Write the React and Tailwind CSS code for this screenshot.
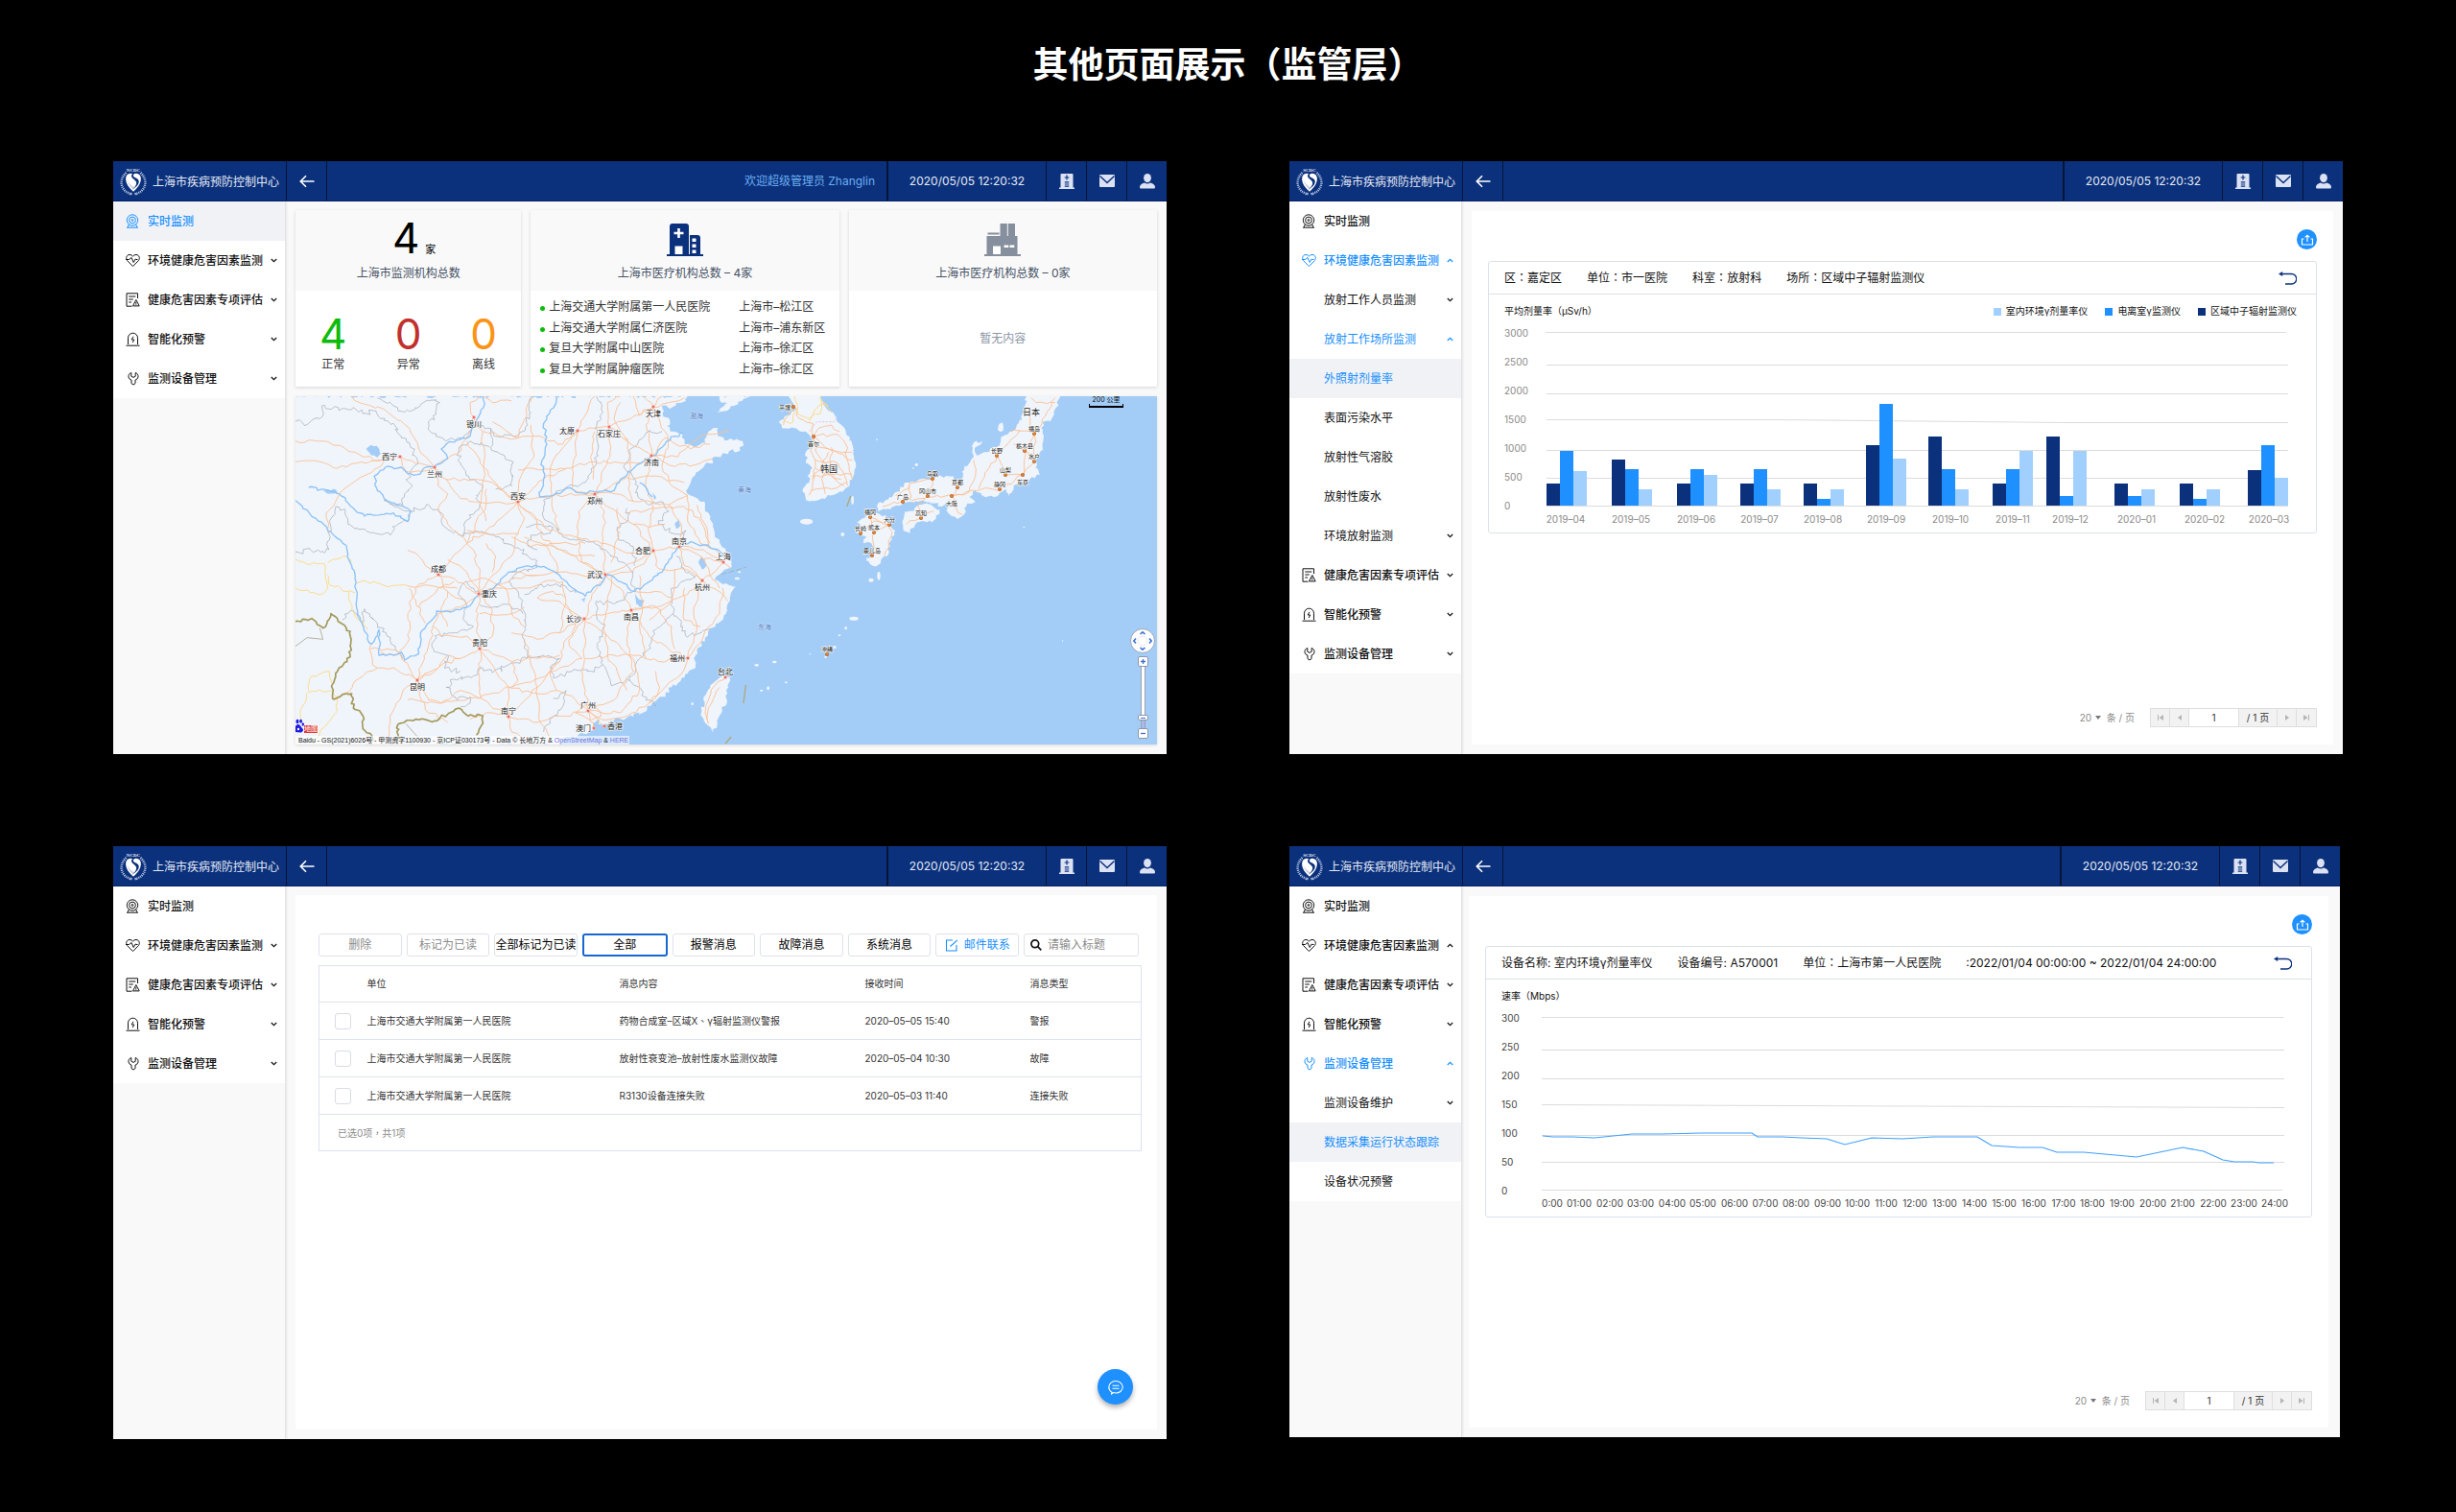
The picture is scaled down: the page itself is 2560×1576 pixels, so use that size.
import React from "react";

const FONT = "font-['Inter','Noto_Sans_CJK_SC',sans-serif]";

/* ---------- icons ---------- */

function Emblem({ label }) {
  return (
    <svg viewBox="0 0 28 30" className="h-[30px] w-7 shrink-0" aria-hidden="true">
      <text x="14" y="5" textAnchor="middle" fontSize="5" fontWeight="700" fill="#e8eefb" fontFamily="Liberation Serif">{label}</text>
      <path d="M6.500 6.200C.8 11-.2 19 5 24.500c2 2 4.800 3.300 7.800 3.700" fill="none" stroke="#c9d5ee" strokeWidth="2.400" strokeDasharray="1 1" />
      <path d="M21.500 6.200c5.700 4.800 6.700 12.800 1.500 18.300-2 2-4.800 3.300-7.800 3.700" fill="none" stroke="#c9d5ee" strokeWidth="2.400" strokeDasharray="1 1" />
      <path d="M10 29l2-1.600M18 29l-2-1.600" stroke="#c9d5ee" strokeWidth=".9" />
      <path d="M14 7.500c-2.500-1.600-6-.8-7.300 2C5 13.500 7 20 14 25.800 21 20 23 13.500 21.300 9.500c-1.300-2.800-4.800-3.600-7.300-2z" fill="#fff" />
      <path d="M14.500 6c-2.600 1.600-3.300 3.600-1.600 5.400 1.800 1.900 4.300 2.900 4.300 5.300 0 2.900-2.700 5.300-4.900 7.400 3.200-2.300 8-5.300 7.400-9.400-.5-3.300-5.600-3.200-5.800-5.700-.1-1.100.5-1.800 1.600-2.300z" fill="#0c317c" />
      <path d="M7.700 14c.9 3.900 3.200 6.800 6 9 .6-.5 1-1 1.300-1.600-3-1.800-5.700-4.200-7.300-7.400z" fill="#0c317c" opacity=".25" />
    </svg>
  );
}

const ArrowLeft = () => (
  <svg viewBox="0 0 16 14" className="h-[14px] w-4" fill="none" stroke="#fff" strokeWidth="1.600" aria-hidden="true">
    <path d="M15.500 7H1.500M7 1.200L1.300 7 7 12.800" />
  </svg>
);

const HospitalIcon = () => (
  <svg viewBox="0 0 16 16" className="size-4" fill="#dbe2f4" aria-hidden="true">
    <path d="M2.500 0h11a1 1 0 011 1v13.500H16V16H0v-1.500h1.500V1a1 1 0 011-1z" />
    <path d="M8 1.600v4.800M5.600 4h4.800M5.800 8.800h4.400M5.800 11h4.400M5.800 13.200h4.400" stroke="#0c317c" strokeWidth="1.200" />
  </svg>
);
const MailIcon = () => (
  <svg viewBox="0 0 16 13" className="h-[13px] w-4" aria-hidden="true">
    <rect width="16" height="13" rx="1" fill="#dbe2f4" />
    <path d="M.5 1.500L8 8.500l7.500-7" fill="none" stroke="#0c317c" strokeWidth="1.500" />
  </svg>
);
const UserIcon = () => (
  <svg viewBox="0 0 16 16" className="size-4" fill="#dbe2f4" aria-hidden="true">
    <ellipse cx="8" cy="4.600" rx="3.900" ry="4.600" />
    <path d="M5 9.500c1.800 1.300 4.200 1.300 6 0 3 .7 5 2.300 5 4.500 0 1-.6 1.600-1.500 1.600h-13C.6 15.600 0 15 0 14c0-2.200 2-3.800 5-4.500z" />
  </svg>
);

const NAV_ICONS = {
  camera: (
    <>
      <circle cx="7" cy="6.500" r="5.700" /><circle cx="7" cy="6.500" r="3.400" /><circle cx="7" cy="6.500" r=".9" />
      <path d="M3.200 11L2.200 13.900M10.800 11l1 2.900M1 14.200h12" />
    </>
  ),
  heart: (
    <>
      <path d="M7.500 13.600L1.600 7.600C-.3 5 .9 1.700 4 1.500c1.500-.1 2.800.7 3.500 1.800.7-1.100 2-1.900 3.500-1.800 3.100.2 4.300 3.500 2.400 6.100z" />
      <path d="M0 6.500h3.500L6 4.500l2.200 5L10.200 6l.8.500h1.500" />
    </>
  ),
  report: (
    <>
      <path d="M12.500 6V.8H1v13.400h5.500M3.300 4h7M3.300 7h4.500M3.300 10h2.700" />
      <path d="M10.800 7.500L7.500 13.900h6.700zM10.800 10v1.700M10.800 12.300v.8" />
    </>
  ),
  alarm: (
    <>
      <path d="M2.500 13V6.200a5 5 0 0110 0V13M.5 14.200h14" />
      <path d="M8 4.800L6.200 8h2.600L7.200 11" />
    </>
  ),
  wrench: (
    <path d="M5.800 1.500C3.800 2.200 2.700 3.900 3 5.900c.3 1.600 1.400 2.700 3 3.200v3.500l2 1.400 2-1.400V9.100c1.600-.5 2.700-1.600 3-3.200.3-2-.8-3.700-2.800-4.400v3.700L8 6.400 5.800 5.200z" />
  ),
};

const NavIcon = ({ name }) => (
  <svg viewBox="0 0 15 15" className="size-[15px] shrink-0" fill="none" stroke="currentColor" strokeWidth="1" aria-hidden="true">
    {NAV_ICONS[name]}
  </svg>
);

const Chevron = ({ up }) => (
  <svg viewBox="0 0 7 5" className="h-[5px] w-[7px] shrink-0" fill="none" stroke="currentColor" strokeWidth="1.200" aria-hidden="true">
    <path d={up ? "M.8 4L3.500 1.400 6.200 4" : "M.8 1l2.700 2.600L6.200 1"} />
  </svg>
);

/* ---------- text with vertically centred full-width punctuation ---------- */

function Txt({ children }) {
  return children.split(/([：，、])/).map((part, i) =>
    /[：，、]/.test(part) ? (
      <span key={i} lang="zh-TW" className="font-['Noto_Sans_CJK_TC',sans-serif]">{part}</span>
    ) : (
      <React.Fragment key={i}>{part}</React.Fragment>
    )
  );
}

/* ---------- window frame ---------- */

function TopBar({ label, welcome }) {
  const cell = "flex w-[42px] items-center justify-center border-l border-[#061437]";
  return (
    <header className="flex h-[42px] items-stretch border-b border-[#06206a] bg-[#0c317c] text-xs text-[#e3e9f6]">
      <div className="flex w-[180px] items-center gap-[6px] pl-[7px]">
        <Emblem label={label} />
        <span className="whitespace-nowrap pt-[2px]">上海市疾病预防控制中心</span>
      </div>
      <button type="button" aria-label="返回" className="flex w-[43px] items-center justify-center border-x border-[#061437]">
        <ArrowLeft />
      </button>
      <div className="flex flex-1 items-center justify-end pr-3 text-[#6aaef2]">{welcome}</div>
      <time className="flex w-[166px] items-center justify-center border-l-2 border-[#061437]">2020/05/05 12:20:32</time>
      <button type="button" aria-label="医院" className={cell}><HospitalIcon /></button>
      <button type="button" aria-label="邮件" className={cell}><MailIcon /></button>
      <button type="button" aria-label="用户" className={cell}><UserIcon /></button>
    </header>
  );
}

function SideNav({ items }) {
  return (
    <nav className="w-[180px] shrink-0 border-r border-[#e2e3e5] bg-[#f9f9f9] shadow-[1px_0_2px_rgba(0,0,0,0.08)]">
      <ul className="bg-white">
        {items.map((it) => (
          <li key={it.text}>
            <button
              type="button"
              className={
                "flex h-[41px] w-full items-center gap-2 pl-[13px] pr-2 text-xs " +
                (it.selected ? "bg-[#f0f2f5] " : "") +
                (it.blue ? "text-[#1890ff] " : "text-[#111] ") +
                (it.icon ? "font-medium" : "")
              }
            >
              {it.icon ? <NavIcon name={it.icon} /> : <span className="w-[15px] shrink-0" />}
              <span className="flex-1 whitespace-nowrap text-left">{it.text}</span>
              {it.chev && <Chevron up={it.chev === "up"} />}
            </button>
          </li>
        ))}
      </ul>
    </nav>
  );
}

function Frame({ label, welcome, nav, children, className = "" }) {
  return (
    <section className={"flex flex-col bg-[#f9f9f9] " + className}>
      <TopBar label={label} welcome={welcome} />
      <div className="flex flex-1">
        <SideNav items={nav} />
        {children}
      </div>
    </section>
  );
}

/* ---------- map ---------- */

function noise(n) {
  const s = Math.sin(n * 127.1 + 311.7) * 43758.5453;
  return s - Math.floor(s) - 0.5;
}
function wiggle(src, amp, step = 14) {
  const pts = src.trim().split(/\s+/).map((p) => p.split(",").map(Number));
  let d = "M" + pts[0].join(" ");
  for (let i = 1; i < pts.length; i++) {
    const [x0, y0] = pts[i - 1];
    const [x1, y1] = pts[i];
    const n = Math.max(1, Math.round(Math.hypot(x1 - x0, y1 - y0) / step));
    for (let k = 1; k <= n; k++) {
      const t = k / n;
      const j = k === n ? 0 : amp;
      const x = x0 + (x1 - x0) * t + noise(x0 + y1 + k * 3.7) * j;
      const y = y0 + (y1 - y0) * t + noise(y0 + x1 + k * 9.1) * j;
      d += "L" + x.toFixed(1) + " " + y.toFixed(1);
    }
  }
  return d;
}

const LAND = [
  "24,40 1250,40 1245,55 1215,60 1195,80 1170,70 1172,95 1195,115 1185,135 1205,150 1235,160 1240,185 1275,198 1305,185 1310,165 1330,140 1345,140 1345,165 1365,178 1395,178 1422,180 1415,210 1380,212 1345,230 1320,250 1300,262 1275,285 1260,310 1250,330 1250,345 1285,365 1305,380 1320,420 1330,440 1335,480 1365,515 1385,540 1388,575 1345,600 1335,615 1370,625 1400,635 1385,660 1375,690 1370,720 1345,750 1320,770 1305,795 1285,825 1270,860 1275,890 1240,920 1200,950 1170,980 1140,1000 1110,1030 1060,1045 1010,1055 990,1065 960,1060 955,1085 905,1105 860,1110 850,1130 24,1130",
  "1342,90 1375,62 1350,52 1350,40 1446,40 1420,55 1395,70 1375,85",
  "1565,40 1580,60 1585,85 1560,100 1535,120 1545,140 1585,140 1630,160 1645,180 1630,205 1620,215 1620,240 1640,265 1625,290 1630,310 1610,330 1620,365 1660,365 1685,355 1715,345 1750,325 1765,300 1772,270 1770,215 1765,190 1745,150 1725,125 1705,90 1675,65 1665,40",
  "2310,40 2305,70 2285,125 2265,150 2235,165 2215,200 2180,215 2155,225 2150,200 2173,180 2145,185 2145,230 2115,270 2105,300 2065,290 2020,295 1940,310 1900,340 1875,365 1845,375 1847,400 1875,392 1920,380 1970,370 2020,375 2045,385 2075,360 2065,385 2065,405 2095,425 2115,410 2125,375 2150,370 2132,355 2150,335 2170,350 2220,352 2245,330 2255,355 2270,330 2280,315 2295,300 2310,320 2320,300 2352,285 2338,262 2340,240 2360,200 2360,120 2385,118 2395,90 2415,40",
  "1930,400 1960,390 2000,375 2038,395 2015,435 1985,430 1960,445 1945,468 1925,460 1925,425",
  "1780,435 1810,410 1850,408 1870,420 1885,435 1900,460 1880,500 1872,540 1840,572 1810,555 1830,530 1825,500 1800,500 1810,480 1775,465 1790,440",
  "1360,912 1385,915 1378,950 1365,1010 1345,1050 1330,1090 1305,1060 1293,1030 1300,990 1320,945",
  "2220,145 2235,122 2238,135 2228,152",
];
const ISLANDS = [
  [1622, 432, 20, 9], [1824, 615, 8, 6], [1848, 602, 5, 13], [1770, 735, 14, 6], [1745, 765, 4, 5], [1522, 871, 7, 4],
  [1466, 881, 7, 4], [1481, 960, 5, 3], [1502, 953, 4, 6], [1710, 825, 5, 5], [1682, 855, 4, 4], [1966, 254, 5, 5],
  [1766, 365, 4, 14], [1735, 472, 6, 6], [1558, 935, 4, 3], [1265, 1002, 4, 4], [1405, 610, 8, 4], [1412, 590, 5, 3],
  [1842, 175, 3, 2], [2302, 450, 3, 2], [2423, 805, 2, 2], [1725, 788, 4, 3], [1955, 265, 3, 2], [1633, 846, 3, 2],
];
const LAKES = [
  "245,205 262,192 282,200 292,220 280,232 262,225", "1284,560 1292,545 1306,552 1308,572 1296,582",
  "1085,655 1098,675 1115,680 1105,700 1090,690", "918,675 932,670 928,685", "1210,440 1222,425 1228,445 1215,455",
  "110,335 150,332 155,345 125,345", "1140,340 1152,358 1146,364", "955,1062 975,1050 970,1085 958,1075",
];
const RIVERS = [
  "24,366 60,395 95,430 125,460 165,490 185,520 195,560 210,610 215,680 225,740 262,815 285,770 285,850 330,850 355,840 365,865 410,845 415,780 455,735 465,712 510,715 560,700 600,660 640,645 690,590 730,575 800,572 850,600 890,640 930,665 985,620 1000,598 1050,625 1085,650 1130,620 1170,590 1200,545 1224,511 1260,495 1300,505 1345,520 1378,545",
  "610,40 612,75 590,115 570,165 495,190 480,205 500,235 458,263 425,265 405,285 375,282 355,262 305,262 270,290 280,335 320,372 385,400 375,432 330,405 290,410 240,415 205,390 160,345 130,335 65,325",
  "838,40 832,75 800,125 810,190 795,240 800,300 788,355 850,345 870,328 920,342 1020,335 1040,300 1085,262 1138,226 1170,200 1210,165 1236,155",
  "1100,310 1120,325 1140,355",
];
const BORDERS = [
  "24,118 50,128 100,110 115,68 160,85 205,75 235,95 275,85 290,110 330,125 355,170 380,185 405,240 370,300 390,320 365,345 360,380 330,380 300,365 385,400 375,432 345,440 320,475 255,465 210,455 185,420 180,400 150,385 130,430 130,490 115,530 70,520 24,530",
  "280,45 330,70 365,90 400,75 440,55 475,60 465,95 440,120 445,150 495,180 550,170 580,130 620,140 650,165 715,165 750,130 755,70 770,40",
  "385,400 440,380 480,405 485,445 540,475 600,465 650,480 700,505 780,555 780,575 720,590 690,620 735,680 740,800 745,860 690,880 640,905 610,890 580,915 520,925 495,950 530,990 570,980 570,1000 540,1010",
  "630,200 570,180 535,200 535,245 565,290 610,320 590,350 600,385 550,440 545,480",
  "635,140 635,200 680,235 705,250 700,320 650,330",
  "965,40 985,90 960,140 970,200 960,260 930,310 880,320 830,350 800,365 800,420 835,445 860,480 900,490 960,500 980,520 1030,545 1080,590 1080,650 1020,690 965,680 965,720 990,760 970,820 985,880 950,900 890,900 830,920 820,890 850,860 800,850 745,860",
  "1170,150 1120,155 1080,200 1050,260 1090,310 1095,355 1130,380 1165,370 1190,400 1160,440 1215,470 1245,460 1240,500",
  "1060,390 1065,430 1030,450 1035,490 1080,510 1085,570",
  "1215,540 1230,575 1275,605 1230,620 1200,640 1205,720 1235,760 1245,790 1290,780 1320,765",
  "1205,720 1150,770 1130,830 1100,860 1070,930 1010,940 985,880",
  "1070,930 1100,950 1120,990 1150,1005",
  "600,660 560,620 535,650 560,700 550,740 580,760 530,780 460,790 455,830 500,850 490,890 540,900",
  "600,690 640,700 680,690 735,720",
  "170,740 205,710 235,750 240,705 280,750 310,790 360,860",
  "740,660 775,640 815,628 870,635 900,655",
  "745,450 790,440 830,450 820,470 760,475 750,500 780,520",
  "830,985 870,960 860,1010 820,1060 800,1090",
];
const NATIONAL = [
  "24,745 75,735 110,765 135,720 155,735 195,775 195,855 160,890 140,940 140,985 200,970 205,1015 235,1040 235,1080 262,1100 262,1130",
  "345,1127 345,1065 400,1050 460,1055 535,1015 565,1040 610,1040 605,1070 590,1100",
];
const YELLOW = [
  "24,548 60,565 115,565 125,640 95,660 24,640", "125,560 185,540 200,560", "215,625 245,618 300,632 375,633",
  "190,650 200,710 250,770", "125,600 130,630 210,655", "80,1127 100,1095 150,1030 155,985 135,960 65,965 40,1020 45,1060",
  "65,960 75,915 130,900 140,940", "1585,40 1595,95 1630,110 1665,95 1665,45 1700,90", "1545,122 1580,120 1585,90 1570,60", "1630,120 1660,70 1690,70",
];
const ROADS = [
  "24,180 130,185 210,215 290,242 352,229 400,250 458,263", "24,245 100,245 155,265 215,250 300,240",
  "200,40 240,65 300,80 380,140 410,205 458,263", "458,263 495,300 585,300 640,310 690,355 719,371",
  "458,263 470,320 500,345 470,390 500,440 540,475 560,500 510,550 490,590 470,599", "130,470 120,405 165,340 205,310 300,245",
  "352,229 370,275 420,275 458,263", "581,107 560,170 530,220 458,263", "581,107 610,150 700,175 770,165 800,170 860,190 905,148",
  "610,150 612,300 600,380 620,430", "581,107 570,60 600,40", "610,40 640,60 700,55", "640,120 720,170 760,40",
  "719,371 660,330 560,180", "719,371 725,300 770,230 760,130", "719,371 790,355 870,350 959,346 1020,345 1100,370 1190,380 1250,350",
  "719,371 620,375 540,360 495,300", "719,371 800,300 870,265 960,245 1060,250 1120,245 1138,226", "719,371 680,410 620,460 560,500",
  "719,371 740,420 720,470 640,475 560,460", "719,371 770,420 800,490 870,530 950,570 994,598", "719,371 820,460 900,480 980,500 1060,530 1144,524",
  "720,270 800,268 870,268", "905,148 870,190 830,240 820,300 830,400 850,460", "905,148 940,80 960,40", "905,148 960,140 1004,135 1060,115 1144,74",
  "905,148 900,210 890,270 890,330 959,346", "1004,135 1000,60 1040,40", "1004,135 1010,200 1000,240 980,290 959,346", "1004,135 1060,180 1138,226",
  "1144,74 1120,130 1138,226", "1144,74 1180,150 1190,200 1170,260 1200,320 1250,350", "1138,226 1220,230 1250,200 1300,160 1380,150",
  "1138,226 1210,260 1290,250 1330,235", "1138,226 1120,300 1140,380 1130,470 1144,524", "1080,40 1100,100 1144,74 1110,40", "1040,60 1020,110 1060,180",
  "1144,74 1190,60 1240,45", "1170,40 1144,74", "1060,170 1070,250 1065,330 1080,370", "1138,226 1180,170 1260,205 1320,190",
  "959,346 990,400 985,500 994,598", "959,346 910,400 905,480 920,560 994,598", "959,346 1010,390 1080,440 1144,524", "959,346 1050,300 1138,290 1240,310",
  "1060,410 1140,390 1240,385 1285,420 1320,500", "1190,380 1230,440 1224,511", "1250,350 1250,430 1290,500 1360,540",
  "1144,524 1224,511 1290,540 1362,560", "1144,524 1160,580 1240,580 1295,617", "1224,511 1240,570 1295,617 1340,585 1362,560",
  "1144,524 1080,560 994,598", "1295,617 1330,640 1375,680", "1295,617 1250,660 1180,690 1074,710", "1295,617 1270,700 1280,760 1250,859",
  "1224,511 1300,520 1362,560 1385,580", "1290,540 1320,600 1350,640", "1210,580 1200,680 1130,740", "994,598 1040,640 1060,680 1074,710",
  "994,598 960,650 926,737", "994,598 920,600 850,590 780,600 700,590", "994,598 1060,590 1100,570 1144,524", "1080,650 1150,650 1200,670",
  "926,737 860,690 780,670", "926,737 1000,720 1074,710", "926,737 850,780 780,800 700,780", "926,737 930,820 920,900 930,960 940,1024",
  "926,737 870,800 850,870 780,950 690,1043", "926,737 1000,790 1080,860 1100,960 1040,1030 940,1024", "1074,710 1060,800 1080,900 1020,990 940,1024",
  "1074,710 1130,790 1190,830 1250,859", "1074,710 1150,700 1200,760 1210,830", "1250,859 1230,910 1180,950 1130,1000 1060,1040 980,1050 940,1024",
  "1250,859 1160,870 1100,850 1020,850 930,860", "1250,859 1300,790 1350,720 1360,640", "920,860 850,890 790,920 700,950 600,980",
  "598,659 540,700 470,720 440,820 405,927", "598,659 560,640 520,610 470,599", "598,659 600,600 580,520 560,500", "598,659 640,600 700,540 720,470",
  "598,659 660,640 740,640 800,620 860,620 870,680 850,780", "598,659 590,740 601,828", "598,659 640,710 640,790 601,828", "598,659 700,610 780,600",
  "560,620 620,610 680,640 700,720 740,760", "470,599 430,570 400,530 375,522", "470,599 500,650 560,690", "470,599 400,640 375,720 380,800 340,850 290,840",
  "375,633 430,630 480,640 520,620", "600,720 700,720 740,700", "530,640 470,640 410,700", "601,828 540,860 480,880 405,927", "601,828 700,870 780,860 850,850",
  "601,828 600,920 605,985 690,1043", "601,828 560,790 480,790 455,760", "601,828 650,900 690,950 690,1043", "260,815 265,880 280,890 340,895 405,927",
  "405,927 360,960 320,1040 310,1127", "405,927 440,990 480,1000 600,985", "405,927 430,1020 500,1060", "280,890 210,930 190,965 145,985", "260,830 340,835 380,890 405,927",
  "405,927 460,900 500,850 540,860", "375,990 480,1000 540,960 605,985", "690,1043 640,1030 570,1050", "690,1043 780,1060 850,1040 940,1024", "690,1043 700,1090 760,1125",
  "690,950 780,970 840,960 900,990 940,1024", "740,800 760,880 780,950 785,1050 820,1110", "940,1024 956,1078", "940,1024 989,1072", "900,1030 930,1005 960,1010 980,1040 940,1050 900,1030",
  "430,750 380,640", "500,760 480,720 500,650", "1100,600 1110,680 1100,760 1120,860", "990,760 1000,850 1030,900 1060,960", "870,690 900,740 880,820 920,860",
  "1280,380 1310,450 1315,510", "1180,440 1130,450 1080,440", "740,480 850,520 900,540 960,540", "850,600 840,560 800,500", "1365,925 1335,945 1315,990 1305,1030 1315,1065", "1350,950 1325,1000 1310,1050",
  "1030,390 1035,480 1010,560", "960,150 950,240 955,300", "560,500 620,375 621,330", "700,480 760,510 850,500 930,500", "780,670 830,650 870,670", "1010,600 1000,700 990,760",
  "1240,640 1240,740 1290,760", "1150,900 1160,960 1130,1000", "700,870 720,930 700,950", "840,960 820,900 850,870", "640,590 650,540 620,500", "500,550 560,590 598,659",
  "1643,165 1660,140 1700,130 1725,150", "1643,165 1680,200 1765,240", "1643,165 1650,210 1680,250 1700,290 1740,320", "1643,165 1635,210 1650,260 1640,330 1630,350",
  "1643,165 1720,160 1745,190 1750,240 1765,300", "1650,200 1700,210 1765,215", "1640,290 1700,285 1765,285", "1635,335 1700,330 1750,310", "1700,200 1700,270 1670,300 1680,345", "1650,240 1720,250 1750,320",
  "1581,72 1600,110 1643,125 1640,160", "1581,72 1550,130", "1650,265 1730,300", "1690,215 1670,260 1640,300",
  "2310,80 2335,155 2310,205 2300,286", "2400,45 2370,100 2335,155 2335,245 2300,286", "2300,286 2230,330 2170,330 2120,340 2076,352", "2290,145 2250,190 2218,226 2180,280 2160,330",
  "2300,286 2245,286 2218,226", "2145,240 2150,290 2130,340 2076,352 2000,355 1925,368 1860,385", "2105,300 2093,325 2076,352", "2016,298 1960,310 1900,350", "2016,298 2000,352 1970,380 1980,420",
  "2260,150 2335,155", "2270,190 2305,210 2335,245", "1820,418 1834,465 1827,538", "1820,418 1881,442 1890,465 1865,540", "1792,468 1834,430 1881,442", "1834,465 1881,442", "1935,440 1980,420 2020,400", "1945,320 1950,355 1925,368",
  "2076,352 2090,390 2110,410", "2325,45 2340,60 2400,60",
];
const CITIES = [
  ["银川", 581, 107, "b"], ["太原", 905, 148, "l"], ["石家庄", 1004, 135, "b"], ["天津", 1144, 74, "b"], ["西宁", 352, 229, "l"],
  ["兰州", 458, 263, "b"], ["济南", 1138, 226, "b"], ["西安", 719, 371, "t"], ["郑州", 959, 346, "b"], ["南京", 1224, 511, "t"],
  ["合肥", 1144, 524, "l"], ["上海", 1362, 560, "t"], ["武汉", 994, 598, "l"], ["杭州", 1295, 617, "b"], ["成都", 470, 599, "t"],
  ["重庆", 598, 659, "r"], ["南昌", 1074, 710, "b"], ["长沙", 926, 737, "l"], ["贵阳", 601, 828, "t"], ["福州", 1250, 859, "l"],
  ["昆明", 405, 927, "b"], ["台北", 1367, 919, "t"], ["南宁", 690, 1043, "t"], ["广州", 940, 1024, "t"], ["澳门", 956, 1078, "l"],
  ["香港", 989, 1072, "r"],
];
const ABROAD = [
  ["平壤", 1581, 72, "l"], ["首尔", 1643, 165, "b"], ["福岛", 2335, 156, "t"], ["栃木县", 2305, 210, "t"], ["水户", 2335, 245, "t"],
  ["长野", 2218, 226, "t"], ["山梨", 2244, 287, "t"], ["东京", 2299, 286, "b"], ["静冈", 2227, 332, "t"], ["京都", 2093, 325, "t"],
  ["大阪", 2076, 353, "b"], ["鸟取", 2016, 299, "t"], ["冈山市", 2000, 352, "t"], ["广岛", 1924, 369, "t"], ["高知", 1980, 420, "t"],
  ["福冈", 1820, 418, "t"], ["大分", 1881, 442, "t"], ["长崎", 1792, 469, "t"], ["熊本", 1834, 466, "t"], ["鹿儿岛", 1827, 539, "t"],
  ["冲绳", 1685, 846, "t"],
];
const PLACES = [["日本", 2325, 99, 9], ["韩国", 1691, 276, 9]];
const SEAS = [["渤海", 1278, 108, 7], ["黄海", 1429, 339, 7], ["东海", 1492, 769, 7]];

function CityLabel({ city, dot, size }) {
  const [name, u, v, side] = city;
  const x = Math.round((u - 24) / 3);
  const y = Math.round((v - 40) / 3);
  const dx = side === "l" ? -3 : side === "r" ? 3 : 0;
  const dy = side === "b" ? 10 : side === "t" ? -3 : 3;
  const anchor = side === "l" ? "end" : side === "r" ? "start" : "middle";
  return (
    <g>
      <circle cx={x} cy={y} r="2" fill={dot === "red" ? "#f7b3ac" : "#b5652a"} />
      <circle cx={x} cy={y} r="1" fill={dot === "red" ? "#e2574c" : "#f28a2e"} />
      <text x={x + dx} y={y + dy} textAnchor={anchor} fontSize={size} fill="#111" stroke="#fff" strokeWidth="1" paintOrder="stroke">{name}</text>
    </g>
  );
}

const MapDrawing = React.memo(function MapDrawing() {
  return (
    <svg viewBox="0 0 898 363" preserveAspectRatio="xMidYMid slice" className="absolute inset-0 h-full w-full" role="img" aria-label="监测机构分布地图">
      <g transform="translate(-8 -13.333) scale(.33333)" fill="none" strokeLinejoin="round">
        {LAND.map((s, i) => <path key={i} d={wiggle(s, 12, 9) + "Z"} fill="#f0f4fb" />)}
        {ISLANDS.map(([x, y, a, b], i) => <ellipse key={i} cx={x} cy={y} rx={a} ry={b} fill="#f0f4fb" />)}
        {LAKES.map((s, i) => <path key={i} d={wiggle(s, 6, 7) + "Z"} fill="#a3cdf6" />)}
        {BORDERS.map((s, i) => <path key={i} d={wiggle(s, 15, 9)} stroke="#a3a8b1" strokeWidth="2" />)}
        {ROADS.map((s, i) => <path key={i} d={wiggle(s, 11, 16)} stroke="#fbbe8e" strokeWidth="2.600" />)}
        {YELLOW.map((s, i) => <path key={i} d={wiggle(s, 10, 12)} stroke="#fbdc8c" strokeWidth="3" />)}
        {RIVERS.map((s, i) => <path key={i} d={wiggle(s, 10, 11)} stroke="#8cc3f8" strokeWidth="4" />)}
        {NATIONAL.map((s, i) => <path key={i} d={wiggle(s, 10, 9)} stroke="#a39a5c" strokeWidth="5" />)}
        <path d="M24 822L60 795 110 800 100 765M370 1065L425 1127" stroke="#b5b2a5" strokeWidth="3" />
        <path d="M1630 150L1655 120 1710 120 1715 105" stroke="#e8b8c8" strokeWidth="2" strokeDasharray="7 4" />
        <path d="M1432 943L1425 1000M1386 1105L1368 1127M1748 385L1760 352" stroke="#b0a878" strokeWidth="4" />
        <path d="M1355 597L1400 585 1433 574" stroke="#9aa6b5" strokeWidth="2" strokeDasharray="18 6" />
      </g>
      <g fontFamily="Noto Sans CJK SC, sans-serif">
        {CITIES.map((c) => <CityLabel key={c[0]} city={c} dot="red" size={8} />)}
        {ABROAD.map((c) => <CityLabel key={c[0]} city={c} dot="brown" size={6} />)}
        {PLACES.map(([t, u, v, s]) => (
          <text key={t} x={Math.round((u - 24) / 3)} y={Math.round((v - 40) / 3)} textAnchor="middle" fontSize={s} fill="#222" stroke="#fff" strokeWidth="1" paintOrder="stroke">{t}</text>
        ))}
        {SEAS.map(([t, u, v, s]) => (
          <text key={t} x={Math.round((u - 24) / 3)} y={Math.round((v - 40) / 3)} textAnchor="middle" fontSize={s} fill="#5b7fc4" stroke="#c5dff9" strokeWidth="1" paintOrder="stroke">{t}</text>
        ))}
      </g>
    </svg>
  );
});

function MapView() {
  const knob = "flex size-[11px] items-center justify-center rounded-[2px] border border-[#8f98a6] bg-white text-[#3d6fd8]";
  return (
    <div className="relative flex-1 overflow-hidden bg-[#a3cdf6] shadow-[0_1px_3px_rgba(0,0,0,0.12)]">
      <MapDrawing />
      <div className="absolute right-[35px] top-0 w-9 text-center">
        <div className="whitespace-nowrap text-[7px] leading-[8px] text-[#111]">200 公里</div>
        <div className="h-1 border-x border-b-2 border-black" />
      </div>
      <div className="absolute bottom-[6px] right-[2px] flex w-[26px] flex-col items-center">
        <button type="button" aria-label="平移" className="mb-[3px] flex size-[26px] items-center justify-center rounded-full border border-[#9aa7b8] bg-white">
          <svg viewBox="0 0 24 24" className="size-6" fill="none" stroke="#3d6fd8" strokeWidth="1.600">
            <circle cx="12" cy="12" r="5" stroke="#e6eaf0" strokeWidth="1" />
            <path d="M9.500 5L12 2.800 14.500 5M9.500 19l2.500 2.200 2.500-2.200M5 9.500L2.800 12 5 14.500M19 9.500l2.200 2.500-2.200 2.500" />
          </svg>
        </button>
        <button type="button" aria-label="放大" className={knob}>
          <svg viewBox="0 0 7 7" className="size-[7px]" stroke="currentColor" strokeWidth="1.300"><path d="M3.500 1v5M1 3.500h5" /></svg>
        </button>
        <div className="relative h-16 w-[5px] border-x border-[#9aa3b0] bg-white">
          <div className="absolute inset-x-0 bottom-0 h-3 bg-[#a9b9ee]" />
          <div className="absolute -left-[4px] bottom-2 flex h-[6px] w-[11px] items-center justify-center rounded-[2px] border border-[#8f98a6] bg-white">
            <div className="h-px w-[5px] bg-[#3d6fd8]" />
          </div>
          <input type="range" aria-label="缩放级别" min="3" max="18" defaultValue="6" className="absolute inset-0 m-0 h-full w-full opacity-0" />
        </div>
        <button type="button" aria-label="缩小" className={knob}>
          <svg viewBox="0 0 7 7" className="size-[7px]" stroke="currentColor" strokeWidth="1.300"><path d="M1 3.500h5" /></svg>
        </button>
      </div>
      <div className="absolute bottom-3 left-0 flex items-end">
        <svg viewBox="0 0 9 15" className="h-[15px] w-[9px]" fill="#1c1ce0" aria-hidden="true">
          <ellipse cx="2" cy="3" rx="1.500" ry="2.200" /><ellipse cx="5.600" cy="2.800" rx="1.400" ry="2" /><ellipse cx="7.800" cy="6" rx="1.200" ry="1.800" />
          <path d="M0 8c2-3 4-2.500 5.500 0S9 11 7.500 13.200 3 14 0 14z" /><circle cx="3" cy="11" r="1.200" fill="#fff" />
        </svg>
        <span className="bg-[#e03a32] text-[7px] leading-[8px] text-white">地图</span>
      </div>
      <div className="absolute bottom-0 left-0 whitespace-nowrap bg-white/60 pl-[3px] pr-px font-['Liberation_Sans','Noto_Sans_CJK_SC',sans-serif] text-[7px] leading-[9px] text-[#111]">
        Baidu - GS(2021)6026号 - 甲测资字1100930 - 京ICP证030173号 - Data © 长地万方 &amp; <a href="#osm" className="text-[#6f6fe0]">OpenStreetMap</a> &amp; <a href="#here" className="text-[#6f6fe0]">HERE</a>
      </div>
    </div>
  );
}

/* ---------- realtime monitoring ---------- */

const HospitalBig = () => (
  <svg viewBox="0 0 38 34" className="h-[34px] w-[38px]" aria-hidden="true">
    <path d="M3 3a3 3 0 013-3h14a3 3 0 013 3v9h9a3 3 0 013 3v17h3v2H0v-2h3z" fill="#0c317c" />
    <path d="M12.500 5v10M7.500 10h10" stroke="#fff" strokeWidth="2.600" />
    <path d="M8.500 23.500h8V32h-8zM26.500 15.500h4v3.500h-4zM26.500 21.500h4V25h-4zM26.500 27.500h4V31h-4z" fill="#fff" />
    <path d="M23.500 12v20" stroke="#f9f9f9" strokeWidth="1" />
  </svg>
);
const FactoryBig = () => (
  <svg viewBox="0 0 38 34" className="h-[34px] w-[38px]" aria-hidden="true">
    <path d="M2.500 32V13h14V0h15.500v13h2.500v19H38v2H0v-2z" fill="#858f9d" />
    <path d="M3.500 9.500h12v2h-12z" fill="#858f9d" />
    <path d="M24.300 0v13" stroke="#f9f9f9" strokeWidth="1" />
    <path d="M9 23.500h8V32H9zM20.500 22.500h4.800v2.500h-4.800zM26.500 22.500h4.800v2.500h-4.800z" fill="#fff" />
  </svg>
);

function Card({ top, title, children }) {
  return (
    <div className="flex flex-col bg-white shadow-[0_1px_3px_rgba(0,0,0,0.15)]">
      <div className="flex h-[84px] flex-col items-center bg-[#f9f9f9] pt-[14px]">
        <div className="flex h-[34px] items-end justify-center">{top}</div>
        <div className="mt-[9px] text-xs leading-[18px] text-[#465266]">{title}</div>
      </div>
      <div className="h-[100px]">{children}</div>
    </div>
  );
}

const STATUS = [
  ["4", "正常", "text-[#0dbb0d]"],
  ["0", "异常", "text-[#c2302b]"],
  ["0", "离线", "text-[#fa9316]"],
];
const HOSPITALS = [
  ["上海交通大学附属第一人民医院", "上海市–松江区"],
  ["上海交通大学附属仁济医院", "上海市–浦东新区"],
  ["复旦大学附属中山医院", "上海市–徐汇区"],
  ["复旦大学附属肿瘤医院", "上海市–徐汇区"],
];

function Realtime() {
  return (
    <main className="flex flex-1 flex-col gap-[10px] p-[10px] pt-[9px]">
      <div className="grid grid-cols-[235fr_321fr_321fr] gap-[10px]">
        <Card
          title="上海市监测机构总数"
          top={
            <p className="flex items-baseline gap-[6px] pl-3 text-black">
              <span className="text-[44px] leading-[34px]">4</span>
              <span className="text-[11px] leading-[14px]">家</span>
            </p>
          }
        >
          <dl className="grid grid-cols-3 pt-7">
            {STATUS.map(([n, t, c]) => (
              <div key={t} className="flex flex-col-reverse items-center gap-[6px]">
                <dt className="text-xs leading-[18px] text-[#333]">{t}</dt>
                <dd className={"text-[44px] leading-[34px] " + c}>{n}</dd>
              </div>
            ))}
          </dl>
        </Card>
        <Card title="上海市医疗机构总数 – 4家" top={<HospitalBig />}>
          <ul className="grid h-full pb-[7px] pl-[10px] pt-[6px] text-xs text-[#333]">
            {HOSPITALS.map(([a, b]) => (
              <li key={a} className="flex items-center">
                <span className="mr-1 mt-[3px] size-[5px] rounded-full bg-[#0dbb0d]" />
                <span className="w-[198px] whitespace-nowrap">{a}</span>
                <span className="whitespace-nowrap">{b}</span>
              </li>
            ))}
          </ul>
        </Card>
        <Card title="上海市医疗机构总数 – 0家" top={<FactoryBig />}>
          <div className="flex h-full items-center justify-center text-xs text-[#8c96a5]">暂无内容</div>
        </Card>
      </div>
      <MapView />
    </main>
  );
}

/* ---------- shared chart page pieces ---------- */

function ShareButton() {
  return (
    <button type="button" aria-label="导出" className="flex size-[21px] items-center justify-center rounded-full bg-[#1e90ff]">
      <svg viewBox="0 0 14 12" className="h-3 w-[14px]" fill="none" stroke="#fff" strokeWidth="1.200" aria-hidden="true">
        <path d="M3.500 5H1.500v6h11V5h-2M7 8V1.200M4.600 3.400L7 1.200l2.400 2.200" />
      </svg>
    </button>
  );
}
function BackButton() {
  return (
    <button type="button" aria-label="返回上级">
      <svg viewBox="0 0 19 14" className="h-[14px] w-[19px]" fill="none" stroke="#0c317c" strokeWidth="1.400" aria-hidden="true">
        <path d="M3 2.500h10.500a4.800 4.800 0 010 10.500H7" />
        <path d="M0 2.500L4.200 0v5z" fill="#0c317c" stroke="none" />
      </svg>
    </button>
  );
}

function Pager() {
  const btn = "flex w-5 items-center justify-center border-r border-[#dedede] last:border-r-0";
  return (
    <div className="flex items-center justify-end gap-4 text-[10px] text-[#8a8a8a]">
      <div className="flex items-center gap-[6px]">
        <span className="relative flex items-center">
          <select aria-label="每页条数" defaultValue="20" className="w-[22px] appearance-none bg-transparent">
            <option value="20">20</option>
            <option value="50">50</option>
          </select>
          <svg viewBox="0 0 6 4" className="pointer-events-none absolute right-0 h-1 w-[6px]" fill="#777" aria-hidden="true"><path d="M0 0h6L3 4z" /></svg>
        </span>
        <span>条 / 页</span>
      </div>
      <div className="flex h-5 items-stretch border border-[#dedede] bg-[#f2f2f2]">
        <button type="button" aria-label="首页" className={btn}>
          <svg viewBox="0 0 6 6" className="size-[6px]" fill="#b5b5b5"><path d="M0 0h1v6H0zM6 0v6L1.500 3z" /></svg>
        </button>
        <button type="button" aria-label="上一页" className={btn}>
          <svg viewBox="0 0 6 6" className="size-[6px]" fill="#b5b5b5"><path d="M5 0v6L1 3z" /></svg>
        </button>
        <input aria-label="页码" defaultValue="1" className="w-[52px] border-r border-[#dedede] bg-white text-center text-[#333]" />
        <span className="flex w-10 items-center justify-center border-r border-[#dedede] text-[#333]">/ 1 页</span>
        <button type="button" aria-label="下一页" className={btn}>
          <svg viewBox="0 0 6 6" className="size-[6px]" fill="#b5b5b5"><path d="M1 0v6l4-3z" /></svg>
        </button>
        <button type="button" aria-label="末页" className={btn}>
          <svg viewBox="0 0 6 6" className="size-[6px]" fill="#b5b5b5"><path d="M5 0h1v6H5zM0 0v6l4.500-3z" /></svg>
        </button>
      </div>
    </div>
  );
}

function ChartPage({ facts, caption, legend, className, children }) {
  return (
    <main className={"flex flex-1 flex-col " + className}>
      <div className="flex flex-1 flex-col bg-white px-[17px] pb-[18px] pt-[19px]">
        <div className="flex justify-end"><ShareButton /></div>
        <div className="mt-3 rounded-[3px] border border-[#dbe1ea]">
          <div className="flex h-[34px] items-center gap-[26px] border-b border-[#dbe1ea] pl-4 pr-5 text-xs text-[#111]">
            {facts.map((f) => <span key={f} className="whitespace-nowrap"><Txt>{f}</Txt></span>)}
            <span className="flex-1" />
            <BackButton />
          </div>
          <div className="flex h-[35px] items-center justify-between pl-4 pr-5 text-[10px] text-[#111]">
            <span>{caption}</span>
            {legend}
          </div>
          {children}
        </div>
        <div className="flex-1" />
        <Pager />
      </div>
    </main>
  );
}

/* ---------- bar chart ---------- */

const MONTHS = [
  ["2019–04", 60, 80, 23, 57, 36], ["2019–05", 128, 148, 48, 38, 17], ["2019–06", 196, 216, 23, 38, 32], ["2019–07", 262, 282, 23, 38, 17],
  ["2019–08", 328, 348, 23, 7, 17], ["2019–09", 393, 414, 63, 106, 49], ["2019–10", 458, 481, 72, 38, 17], ["2019–11", 525, 546, 23, 38, 57],
  ["2019–12", 581, 606, 72, 10, 57], ["2020–01", 652, 675, 23, 10, 17], ["2020–02", 720, 746, 23, 7, 17], ["2020–03", 791, 813, 37, 63, 29],
];
const LEGEND = [
  ["室内环境γ剂量率仪", "bg-[#a1d0ff]"],
  ["电离室γ监测仪", "bg-[#1e90ff]"],
  ["区域中子辐射监测仪", "bg-[#0c317c]"],
];

function BarChart() {
  return (
    <svg viewBox="0 0 862 213" className="block w-full" role="img" aria-label="平均剂量率柱状图">
      <path d="M59 4.500H831M60 38.500H833M60 68.500H833M60 95.500H300L600 98.500H833M60 127.500H833M60 156.500H833M60 185.500H833" fill="none" stroke="#dcdcdc" />
      <g fontSize="10" fill="#8a8a8a">
        {[3000, 2500, 2000, 1500, 1000, 500, 0].map((v, i) => <text key={v} x="16" y={9 + i * 30}>{v}</text>)}
        {MONTHS.map(([t, , cx]) => <text key={t} x={cx} y="203" textAnchor="middle">{t}</text>)}
      </g>
      {MONTHS.map(([t, x, , a, b, c]) => (
        <g key={t}>
          <rect x={x} y={185 - a} width="14" height={a} fill="#0c317c" />
          <rect x={x + 14} y={185 - b} width="14" height={b} fill="#1e90ff" />
          <rect x={x + 28} y={185 - c} width="14" height={c} fill="#a1d0ff" />
        </g>
      ))}
    </svg>
  );
}

/* ---------- line chart ---------- */

const HOURS = [69, 97, 129, 161, 194, 226, 259, 291, 323, 356, 387, 417, 447, 478, 509, 540, 571, 602, 632, 663, 695, 726, 758, 790, 822];
const SPEED =
  "59,128 70,129 90,129 113,130 152,126 184,126 224,125 277,125 283,129 309,129 329,130 355,131 374,137 402,130 434,131 466,129 512,129 527,138 556,140 580,140 595,145 623,145 645,147 678,150 726,140 748,144 768,153 780,155 799,155 806,156 821,156";

function LineChart() {
  return (
    <svg viewBox="0 0 860 212" className="block w-full" role="img" aria-label="速率折线图">
      <path d="M58 4.500H831M58 38.500H832M58 68.500H832M58 95.500L832 98.500M58 127.500H832M58 155.500H832M58 184.500H830" fill="none" stroke="#dcdcdc" />
      <g fontSize="10" fill="#444">
        {[300, 250, 200, 150, 100, 50, 0].map((v, i) => <text key={v} x="16" y={9 + i * 30}>{v}</text>)}
        {HOURS.map((x, i) => (
          <text key={x} x={x} y="202" textAnchor="middle">{i === 0 ? "0:00" : String(i).padStart(2, "0") + ":00"}</text>
        ))}
      </g>
      <polyline points={SPEED} fill="none" stroke="#3ea0ff" strokeWidth="1.200" />
    </svg>
  );
}

/* ---------- messages ---------- */

const MESSAGES = [
  ["上海市交通大学附属第一人民医院", "药物合成室–区域X、γ辐射监测仪警报", "2020–05–05 15:40", "警报"],
  ["上海市交通大学附属第一人民医院", "放射性衰变池–放射性废水监测仪故障", "2020–05–04 10:30", "故障"],
  ["上海市交通大学附属第一人民医院", "R3130设备连接失败", "2020–05–03 11:40", "连接失败"],
];
const TABS = [
  ["删除", "border-[#dde2ec] text-[#8c8c8c]"],
  ["标记为已读", "border-[#dde2ec] text-[#8c8c8c]"],
  ["全部标记为已读", "border-[#dde2ec] text-black"],
  ["全部", "border-2 border-[#1668d0] text-black"],
  ["报警消息", "border-[#dde2ec] text-black"],
  ["故障消息", "border-[#dde2ec] text-black"],
  ["系统消息", "border-[#dde2ec] text-black"],
];

function Messages() {
  const tab = "flex h-6 flex-1 items-center justify-center whitespace-nowrap rounded-[3px] border text-xs ";
  return (
    <main className="flex flex-1 flex-col p-[10px] pt-[9px]">
      <div className="relative flex-1 bg-white pl-6 pr-4 pt-10">
        <div className="mr-[3px] flex gap-[5px]">
          {TABS.map(([t, c]) => <button key={t} type="button" className={tab + c}>{t}</button>)}
          <button type="button" className={tab + "gap-[6px] border-[#dde2ec] text-[#1890ff]"}>
            <svg viewBox="0 0 14 13" className="h-[13px] w-[14px]" fill="none" stroke="currentColor" strokeWidth="1.100" aria-hidden="true">
              <path d="M8 1H1.500v11h10.500V6M5.500 7.500L13 .8" />
            </svg>
            邮件联系
          </button>
          <div className="flex h-6 w-[120px] items-center gap-[6px] rounded-[3px] border border-[#dde2ec] pl-[6px] text-xs">
            <svg viewBox="0 0 12 12" className="size-3 shrink-0" fill="none" stroke="#111" strokeWidth="1.700" aria-hidden="true">
              <circle cx="4.800" cy="4.800" r="3.900" /><path d="M7.700 7.700l3.600 3.600" />
            </svg>
            <input type="text" aria-label="请输入标题" placeholder="请输入标题" className="w-full min-w-0 bg-transparent placeholder:text-[#8c8c8c]" />
          </div>
        </div>
        <table className="mt-[9px] w-full table-fixed border-collapse border border-[#dde2ec] text-left text-[10px] text-[#333]">
          <colgroup>
            <col className="w-[50px]" /><col className="w-[263px]" /><col className="w-[256px]" /><col className="w-[172px]" /><col />
          </colgroup>
          <thead>
            <tr className="h-[38px] border-b border-[#dde2ec]">
              <td />
              {["单位", "消息内容", "接收时间", "消息类型"].map((h) => <th key={h} scope="col" className="font-normal">{h}</th>)}
            </tr>
          </thead>
          <tbody>
            {MESSAGES.map((m, i) => (
              <tr key={m[2]} className="h-[39px] border-b border-[#dde2ec]">
                <td className="pl-4">
                  <input type="checkbox" aria-label={"选择第" + (i + 1) + "条"} className="block size-[17px] appearance-none rounded-[3px] border border-[#d9dce2] bg-white" />
                </td>
                {m.map((c) => <td key={c} className="whitespace-nowrap"><Txt>{c}</Txt></td>)}
              </tr>
            ))}
          </tbody>
          <tfoot>
            <tr className="h-[38px]">
              <td colSpan={5} className="pl-[19px] text-[#8c8c8c]"><Txt>已选0项，共1项</Txt></td>
            </tr>
          </tfoot>
        </table>
        <button type="button" aria-label="在线咨询" className="absolute bottom-[26px] right-[25px] flex size-[37px] items-center justify-center rounded-full bg-[#1e90ff] shadow-[0_3px_5px_rgba(0,0,0,0.3)]">
          <svg viewBox="0 0 16 16" className="size-4" fill="none" stroke="#fff" strokeWidth="1.100" aria-hidden="true">
            <path d="M4 13.200C2 12 .8 10 .8 7.800.8 4.300 4 1.500 8 1.500s7.200 2.800 7.200 6.300S12 14 8 14c-1 0-1.800-.1-2.600-.4L3.600 15z" />
            <path d="M4.500 6.300h7M4.500 9.300h7" />
          </svg>
        </button>
      </div>
    </main>
  );
}

/* ---------- navigation data ---------- */

const CAM = { icon: "camera", text: "实时监测" };
const ENV = { icon: "heart", text: "环境健康危害因素监测", chev: "down" };
const EVAL = { icon: "report", text: "健康危害因素专项评估", chev: "down" };
const WARN = { icon: "alarm", text: "智能化预警", chev: "down" };
const DEV = { icon: "wrench", text: "监测设备管理", chev: "down" };

const NAV_REALTIME = [{ ...CAM, blue: true, selected: true }, ENV, EVAL, WARN, DEV];
const NAV_MESSAGES = [CAM, ENV, EVAL, WARN, DEV];
const NAV_DOSE = [
  CAM,
  { ...ENV, blue: true, chev: "up" },
  { text: "放射工作人员监测", chev: "down" },
  { text: "放射工作场所监测", blue: true, chev: "up" },
  { text: "外照射剂量率", blue: true, selected: true },
  { text: "表面污染水平" },
  { text: "放射性气溶胶" },
  { text: "放射性废水" },
  { text: "环境放射监测", chev: "down" },
  EVAL,
  WARN,
  DEV,
];
const NAV_DEVICE = [
  CAM,
  { ...ENV, chev: "up" },
  EVAL,
  WARN,
  { ...DEV, blue: true, chev: "up" },
  { text: "监测设备维护", chev: "down" },
  { text: "数据采集运行状态跟踪", blue: true, selected: true },
  { text: "设备状况预警" },
];

export default function App() {
  return (
    <div className={"min-h-screen bg-black pb-[76px] " + FONT} lang="zh-CN">
      <h1 className="flex h-[168px] justify-center pt-[45px] text-[37px] leading-[46px] font-bold text-white">其他页面展示（监管层）</h1>
      <div className="grid grid-cols-2 gap-x-32 gap-y-24 px-[118px]">
        <Frame label="NCDC" welcome="欢迎超级管理员 Zhanglin" nav={NAV_REALTIME} className="min-h-[618px]">
          <Realtime />
        </Frame>
        <Frame label="SCDC" nav={NAV_DOSE} className="min-h-[618px]">
          <ChartPage
            className="p-[10px]"
            facts={["区：嘉定区", "单位：市一医院", "科室：放射科", "场所：区域中子辐射监测仪"]}
            caption="平均剂量率（μSv/h）"
            legend={
              <ul className="flex gap-[18px]">
                {LEGEND.map(([t, c]) => (
                  <li key={t} className="flex items-center gap-[5px]"><span className={"size-2 " + c} />{t}</li>
                ))}
              </ul>
            }
          >
            <BarChart />
          </ChartPage>
        </Frame>
        <Frame label="NCDC" nav={NAV_MESSAGES} className="min-h-[618px]">
          <Messages />
        </Frame>
        <Frame label="SCDC" nav={NAV_DEVICE} className="mb-[2px] mr-[3px] min-h-[616px]">
          <ChartPage
            className="py-[10px] pl-[7px] pr-3"
            facts={["设备名称: 室内环境γ剂量率仪", "设备编号: A570001", "单位：上海市第一人民医院", ":2022/01/04 00:00:00 ~ 2022/01/04 24:00:00"]}
            caption="速率（Mbps）"
          >
            <LineChart />
          </ChartPage>
        </Frame>
      </div>
    </div>
  );
}
